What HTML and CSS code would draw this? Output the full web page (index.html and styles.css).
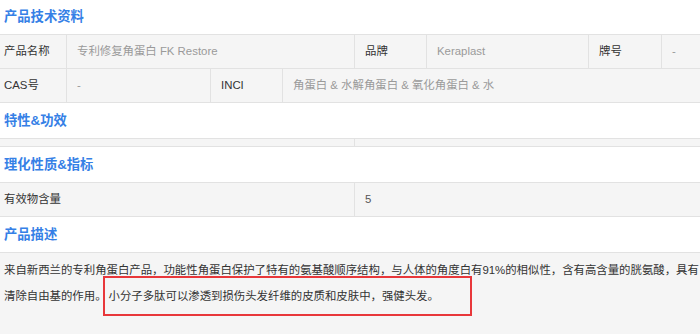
FILE: index.html
```html
<!DOCTYPE html>
<html lang="zh-CN">
<head>
    <meta charset="UTF-8">
    <meta name="viewport" content="width=device-width, initial-scale=1.0">
    <title>产品技术资料</title>
    <link rel="stylesheet" href="styles.css">
</head>
<body>
    <div class="sheet">
        <div class="sec-title first">产品技术资料</div>
        <div class="row">
            <div class="cell label w73">产品名称</div>
            <div class="cell value w288">专利修复角蛋白 FK Restore</div>
            <div class="cell label w72">品牌</div>
            <div class="cell value w162">Keraplast</div>
            <div class="cell label w73">牌号</div>
            <div class="cell value grow">-</div>
        </div>
        <div class="row">
            <div class="cell label w73">CAS号</div>
            <div class="cell value w144">-</div>
            <div class="cell label w72">INCI</div>
            <div class="cell value grow">角蛋白 &amp; 水解角蛋白 &amp; 氧化角蛋白 &amp; 水</div>
        </div>

        <div class="sec-title">特性&amp;功效</div>
        <div class="row empty">
            <div class="cell w361"></div>
            <div class="cell grow"></div>
        </div>

        <div class="sec-title">理化性质&amp;指标</div>
        <div class="row">
            <div class="cell label w361">有效物含量</div>
            <div class="cell num grow">5</div>
        </div>

        <div class="sec-title">产品描述</div>
        <div class="desc">
            来自新西兰的专利角蛋白产品，功能性角蛋白保护了特有的氨基酸顺序结构，与人体的角度白有91%的相似性，含有高含量的胱氨酸，具有清除自由基的作用。<span class="mark">小分子多肽可以渗透到损伤头发纤维的皮质和皮肤中，强健头发。</span>
        </div>
    </div>
</body>
</html>
```

FILE: styles.css
```css
body {
    margin: 0;
    overflow: hidden;
    background-color: #FFFFFF;
    font-family: "Liberation Sans", "Noto Sans CJK SC", sans-serif;
    font-size: 11.4px;
    color: #333333;
}
.sheet {
    width: 723px;
    margin-left: -6px;
}
.sec-title {
    height: 35px;
    line-height: 35px;
    padding: 0 10px;
    font-size: 13.3px;
    font-weight: bold;
    color: #3580e6;
    border-bottom: 1px solid #e2e2e2;
}
.sec-title.first {
    height: 34px;
    line-height: 34px;
}
.row {
    display: flex;
    height: 33px;
    background-color: #f5f5f5;
    border-bottom: 1px solid #e2e2e2;
}
.row.empty {
    height: 7px;
}
.cell {
    box-sizing: border-box;
    padding: 0 10px;
    line-height: 33px;
    border-right: 1px solid #e2e2e2;
    white-space: nowrap;
    overflow: hidden;
}
.label {
    color: #333333;
}
.value {
    color: #9a9a9a;
}
.num {
    color: #555555;
}
.w72 { width: 72px; }
.w73 { width: 73px; }
.w144 { width: 144px; }
.w162 { width: 162px; }
.w288 { width: 288px; }
.w361 { width: 361px; }
.grow {
    flex: 1;
    border-right: none;
}
.desc {
    min-height: 74px;
    padding: 4px 10px;
    line-height: 26px;
    background-color: #f5f5f5;
}
/* highlighted sentence */
.mark {
    margin-left: -4px;
    padding: 12px 31px 12px 4px;
    border: 2px solid #e8373a;
}
```
